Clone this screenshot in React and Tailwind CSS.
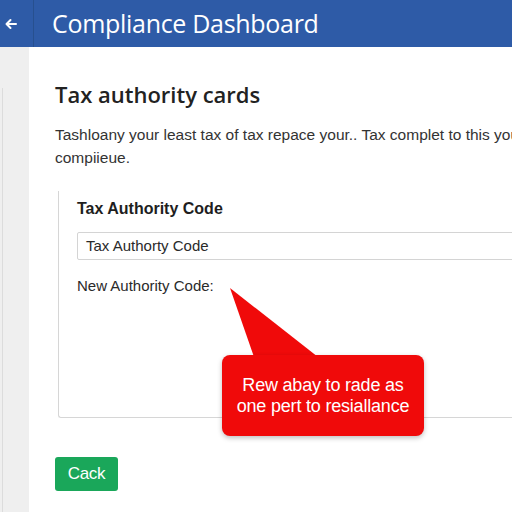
import React from 'react';

const Header = () => (
  <div className="h-[47px] bg-[#2e5ba7] flex items-stretch">
    <div className="w-[34px] shrink-0 flex items-center pl-[5px] border-r border-[#27508f]">
      <svg width="12" height="12" viewBox="0 0 12 12" fill="none" stroke="white" strokeWidth="2" strokeLinecap="round" strokeLinejoin="round">
        <path d="M11 6H1.5M5.5 2L1.5 6l4 4" />
      </svg>
    </div>
    <h1 className="pl-[18px] flex items-center text-white text-[25px] font-['Open_Sans',sans-serif] tracking-[-0.3px]">
      Compliance Dashboard
    </h1>
  </div>
);

const App = () => {
  return (
    <div className="w-[512px] h-[512px] overflow-hidden bg-white font-['Liberation_Sans',Arial,sans-serif]">
      <Header />
      <div className="flex h-[465px]">
        {/* left rail */}
        <div className="w-[29px] shrink-0 bg-[#efefef] pt-[41px]">
          <div className="ml-[2px] h-full border-l border-[#dcdcdc]" />
        </div>

        {/* main */}
        <div className="flex-1 min-w-0 pl-[26px] pt-[33px]">
          <h2 className="text-[22px] font-semibold text-[#222] font-['Open_Sans',sans-serif] leading-[28px]">
            Tax authority cards
          </h2>
          <p className="mt-[15px] text-[15.5px] leading-[23px] text-[#333] whitespace-nowrap">
            Tashloany your least tax of tax repace your.. Tax complet to this your
            <br />
            compiieue.
          </p>

          {/* card */}
          <div className="relative mt-[22px] ml-[3px] h-[227px] border-l border-b border-[#d6d6d6] rounded-bl-[3px] pl-[18px] pt-[8px]">
            <h3 className="text-[16px] font-bold text-[#1e1e1e] leading-[20px]">Tax Authority Code</h3>
            <div className="mt-[13px] h-[28px] border border-[#d4d4d4] rounded-[2px] flex items-center pl-[8px] text-[15px] text-[#2a2a2a] -mr-[20px]">
              Tax Authorty Code
            </div>
            <p className="mt-[17px] text-[15px] text-[#2a2a2a] leading-[18px]">New Authority Code:</p>

            {/* callout */}
            <div className="absolute left-[163px] top-[97px]">
              <svg width="96" height="70" viewBox="0 0 96 70" className="absolute left-0 top-0">
                <path d="M8 0 L32 69 L96 69 Z" fill="#f00a0a" />
              </svg>
            </div>
            <div className="absolute left-[163px] top-[164px] w-[202px] h-[81px] rounded-[8px] bg-[#f00a0a] shadow-[0_2px_5px_rgba(0,0,0,0.25)] flex flex-col items-center justify-center text-white text-[18px] leading-[21px] tracking-[-0.2px]">
              <span>Rew abay to rade as</span>
              <span>one pert to resiallance</span>
            </div>
          </div>

          <button className="mt-[39px] w-[63px] h-[34px] rounded-[3px] bg-[#1aa75a] text-white text-[17px] tracking-[-0.3px]">
            Cack
          </button>
        </div>
      </div>
    </div>
  );
};

export default App;
